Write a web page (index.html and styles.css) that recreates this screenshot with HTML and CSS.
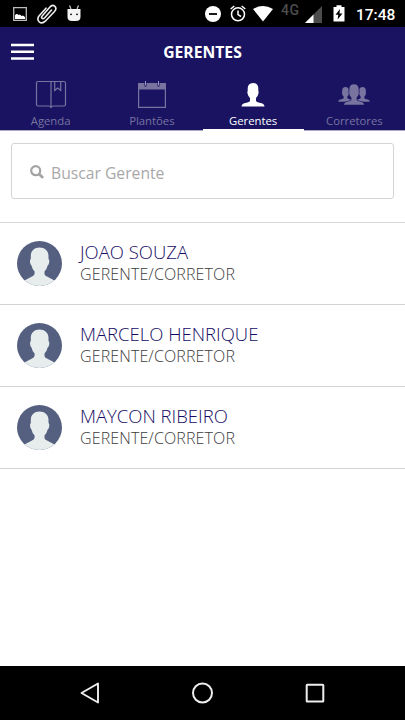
FILE: index.html
```html
<!DOCTYPE html>
<html lang="pt-BR">
<head>
<meta charset="utf-8">
<title>Gerentes</title>
<link rel="stylesheet" href="styles.css">
</head>
<body>
<svg class="defs" aria-hidden="true">
  <symbol id="avatar" viewBox="0 0 45 45">
    <clipPath id="disc"><circle cx="22.5" cy="22.5" r="22.5"/></clipPath>
    <g clip-path="url(#disc)">
      <path fill="#556080" d="M0 0H45V45H0z"/>
      <path fill="#e7eced" d="M22.5 6.500C27.500 6.500 31.500 9.500 31.500 15V18Q33 19 31.800 23Q31.200 24 30.700 24.500Q29.700 28.500 27.500 30.500V33Q27.600 34.500 30 35.500L37.500 39.500V45H7.500V39.500L15 35.500Q17.600 34.300 17.600 32.500V30.500Q15.300 28.500 14.500 24.500Q13.800 24 13.300 22.500Q12.400 19 13.800 18V15C13.800 9.500 17.500 6.500 22.500 6.500z"/>
    </g>
  </symbol>
  <symbol id="person" viewBox="0 0 24 24">
    <path d="M12 0Q17.300 .2 17.300 5.500V8Q18 8.500 17.300 11Q16.800 13.500 15 15V18Q15.500 19 18.500 19.700Q23.500 20.500 23.500 23.500H.5Q.5 20.500 5.500 19.700Q8.500 19 9 18V15Q7.200 13.500 6.700 11Q6 8.500 6.700 8V5.500Q6.700.2 12 0z"/>
  </symbol>
</svg>
<div class="status">
  <div class="group">
    <svg width="14" height="14" viewBox="0 0 14 14"><path fill="none" stroke="#bbb" stroke-width="1.300" d="M.7.700H13.300V13.300H.7z"/><path fill="#fff" d="M2 12V8L4 6.700L5.500 8L7 7.500L8.500 9L10 8.500L12 10V12z"/></svg>
    <svg class="clip" width="20" height="20" viewBox="0 0 20 20"><path fill="none" stroke="#eee" stroke-width="1.600" stroke-linecap="round" d="M14.500 6L7.500 14Q6 15.300 5 14.200Q4 13.200 5.200 12L12.500 3.500Q15.200 .2 17.700 2.100Q20.200 4.500 17.500 7.500L8.300 17.200Q5 20.200 2.200 17.800Q-.5 15 2.200 11.800L9 4.200"/></svg>
    <svg class="droid" width="14" height="17" viewBox="0 0 14 17"><path fill="#f4f4f4" d="M.5 4H13.500V12Q13.500 16 9 16H5Q.5 16 .5 12z"/><path stroke="#ccc" stroke-width="1.200" d="M2.500 .5L4 4M11.500 .5L10 4"/><circle cx="4" cy="9.300" r=".9"/><circle cx="10" cy="9.300" r=".9"/></svg>
  </div>
  <div class="group">
    <svg width="16" height="16" viewBox="0 0 16 16"><circle cx="8" cy="8" r="8" fill="#fff"/><path stroke="#000" stroke-width="1.800" d="M4 8H12"/></svg>
    <svg class="alarm" width="16" height="17" viewBox="0 0 16 17"><g fill="none" stroke="#fff" stroke-width="1.500"><circle cx="8" cy="9.300" r="6.500"/><path d="M.7 4L4.300 1M15.300 4L11.700 1M8 5.500V9.700L11 11.500"/></g></svg>
    <svg class="wifi" width="20" height="16" viewBox="0 0 20 16"><path fill="#fff" d="M0 3Q10-3 20 3L10 15.500z"/></svg>
    <span class="net">4G</span>
    <svg class="signal" width="17" height="17" viewBox="0 0 17 17"><path fill="#4c4c4c" d="M17 0V17H0z"/><path fill="#fff" d="M8.500 8.500V17H0z"/></svg>
    <svg class="battery" width="12" height="17" viewBox="0 0 12 17"><path fill="#fff" d="M.5 2H3.500V.3H8.500V2H11.500V16.500H.5z"/><path d="M7 4L2.500 9.800H5.300L4.600 14.500L9.500 8.500H6.500z"/></svg>
    <span class="time">17:48</span>
  </div>
</div>
<header>
  <div class="bar">
    <svg width="23" height="18" viewBox="0 0 23 18"><path stroke="#fff" stroke-width="2.600" d="M0 2H23M0 8.700H23M0 15.500H23"/></svg>
    <h1>GERENTES</h1>
  </div>
  <nav>
    <a class="tab">
      <svg width="32" height="28" viewBox="0 0 32 28"><path fill="none" stroke="#78749f" stroke-width="1.200" d="M16 1.500H3Q1.500 1.500 1.500 3V24.500Q1.500 26 3 26H13.500Q16 26 16 28V1.500H29Q30.500 1.500 30.500 3V24.500Q30.500 26 29 26H18.500Q16 26 16 28M19.700 1.500V10.500L22.700 8L25.700 10.500V1.500"/></svg>
      <span>Agenda</span>
    </a>
    <a class="tab">
      <svg width="28" height="28" viewBox="0 0 28 28"><path fill="none" stroke="#78749f" stroke-width="1.200" d="M.6 3.500H27.400V27.400H.6z"/><path fill="#78749f" d="M0 3H28V9.500H0z"/><path stroke="#191362" stroke-width="2" d="M7.500 3V6.500M20.500 3V6.500"/><path stroke="#9895bb" stroke-width="1" d="M7.500 1V5.500M20.500 1V5.500"/></svg>
      <span>Plantões</span>
    </a>
    <a class="tab active">
      <svg class="single" width="24" height="24"><use href="#person"/></svg>
      <span>Gerentes</span>
    </a>
    <a class="tab">
      <svg class="team" width="32" height="22" viewBox="0 0 32 22"><g fill="#78749f"><use href="#person" x="0" y="3" width="15" height="15"/><use href="#person" x="17" y="3" width="15" height="15"/></g><use href="#person" x="5.500" y="0" width="21" height="21.500" fill="#78749f" stroke="#191362" stroke-width="1.300" paint-order="stroke"/></svg>
      <span>Corretores</span>
    </a>
  </nav>
</header>
<main>
  <div class="search">
    <svg width="14" height="14" viewBox="0 0 14 14"><g fill="none" stroke="#a3a3a3"><circle cx="5.700" cy="5.700" r="4.500" stroke-width="2.200"/><path stroke-width="2.900" stroke-linecap="round" d="M9.500 9.500L12.200 12"/></g></svg>
    <span>Buscar Gerente</span>
  </div>
  <ul>
    <li><svg width="45" height="45"><use href="#avatar"/></svg><div><p class="name">JOAO SOUZA</p><p class="role">GERENTE/CORRETOR</p></div></li>
    <li><svg width="45" height="45"><use href="#avatar"/></svg><div><p class="name">MARCELO HENRIQUE</p><p class="role">GERENTE/CORRETOR</p></div></li>
    <li><svg width="45" height="45"><use href="#avatar"/></svg><div><p class="name">MAYCON RIBEIRO</p><p class="role">GERENTE/CORRETOR</p></div></li>
  </ul>
</main>
<footer>
  <svg width="20" height="22" viewBox="0 0 20 22"><path fill="none" stroke="#eee" stroke-width="1.900" stroke-linejoin="round" d="M18 1.500V20.500L1.500 11z"/></svg>
  <svg width="22" height="22" viewBox="0 0 22 22"><circle cx="10.500" cy="11" r="9.500" fill="none" stroke="#eee" stroke-width="2"/></svg>
  <svg width="20" height="20" viewBox="0 0 20 20"><rect x="1.700" y="1.800" width="16.600" height="16.600" rx=".5" fill="none" stroke="#eee" stroke-width="2"/></svg>
</footer>
</body>
</html>
```
FILE: styles.css
```css
* { box-sizing: border-box; margin: 0; padding: 0; }
body {
  width: 405px;
  height: 720px;
  display: flex;
  flex-direction: column;
  overflow: hidden;
  background: #fff;
  font-family: "Open Sans", sans-serif;
}
svg { display: block; flex: none; }
.defs { position: absolute; width: 0; height: 0; }
.status {
  height: 27px;
  background: #000;
  color: #fff;
  display: flex;
  justify-content: space-between;
  padding: 0 8px 0 13px;
  font-family: Roboto, sans-serif;
}
.group { display: flex; align-items: center; }
.clip { margin-left: 10px; }
.droid { margin-left: 10px; margin-bottom: 1px; }
.alarm { margin-left: 9px; margin-bottom: 1px; }
.wifi { margin-left: 7px; }
.net {
  width: 20px;
  margin: 0 4px 7px 8px;
  font-size: 14px;
  line-height: 14px;
  font-weight: 500;
  letter-spacing: .5px;
  color: #4c4c4c;
}
.signal { margin-top: 1px; }
.battery { margin-left: 11px; }
.time {
  width: 41px;
  margin-left: 11px;
  padding-top: 2px;
  font-size: 15.5px;
  font-weight: 500;
  white-space: nowrap;
}
header {
  height: 104px;
  background: #191362;
  color: #fff;
  border-bottom: 1px solid #aaa8c4;
}
.bar {
  height: 50px;
  display: grid;
  grid-template-columns: 34px 1fr 34px;
  align-items: center;
  padding: 0 11px;
}
h1 {
  font-size: 15.7px;
  line-height: 24px;
  font-weight: 700;
  text-align: center;
}
nav { display: grid; grid-template-columns: repeat(4, 1fr); height: 54px; }
.tab {
  display: flex;
  flex-direction: column;
  align-items: center;
  padding-top: 3px;
  font-size: 11.3px;
  line-height: 16px;
  color: #78749f;
  border-bottom: 2px solid transparent;
}
.tab span { margin-top: 5px; }
.active { color: #fff; border-color: #fff; font-weight: 500; }
.single { margin: 3px 0 1px; fill: #fff; }
.team { margin: 4px 0 2px; }
main { flex: 1; }
.search {
  height: 56px;
  margin: 12px 11px 23px;
  border: 1px solid #d4d4d4;
  border-radius: 3px;
  display: flex;
  align-items: center;
  padding: 2px 18px 0;
  gap: 7px;
  font-size: 15.7px;
  color: #a8a8a8;
}
.search span { padding-top: 2px; }
ul { list-style: none; border-top: 1px solid #d8d8d8; }
li {
  height: 82px;
  border-bottom: 1px solid #d2d2d2;
  display: flex;
  align-items: center;
  gap: 18px;
  padding-left: 17px;
}
li div { padding-bottom: 2px; }
.name { margin-bottom: 1px; font-size: 18.5px; line-height: 23px; color: #150c63; font-weight: 350; }
.role { font-size: 16px; line-height: 21px; color: #3c3c3c; font-weight: 350; letter-spacing: .12px; }
footer {
  height: 54px;
  background: #000;
  display: flex;
  align-items: center;
  justify-content: space-between;
  padding: 0 80px;
}
```
